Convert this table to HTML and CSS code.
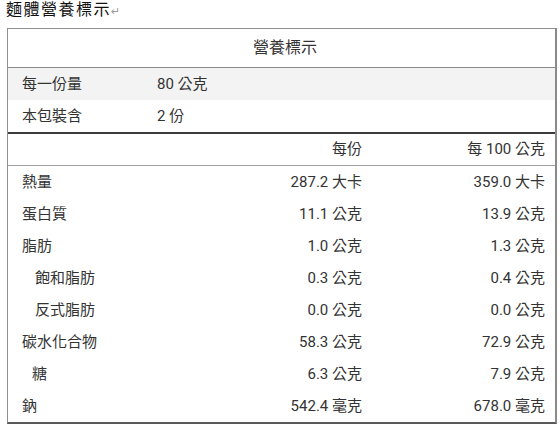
FILE: index.html
```html
<!DOCTYPE html>
<html lang="zh-Hant">
<head>
<meta charset="utf-8">
<title>麵體營養標示</title>
<link rel="stylesheet" href="styles.css">
</head>
<body>
<div class="doc-title">麵體營養標示<span class="ret">↵</span></div>
<div class="panel">
  <div class="panel-head">營養標示</div>
  <div class="row row-gray">
    <div class="c1">每一份量</div>
    <div class="c2">80 公克</div>
  </div>
  <div class="row row-pack">
    <div class="c1">本包裝含</div>
    <div class="c2">2 份</div>
  </div>
  <div class="row row-colhead">
    <div class="c1"></div>
    <div class="c3">每份</div>
    <div class="c4">每 100 公克</div>
  </div>
  <div class="row">
    <div class="c1">熱量</div>
    <div class="c3">287.2 大卡</div>
    <div class="c4">359.0 大卡</div>
  </div>
  <div class="row">
    <div class="c1">蛋白質</div>
    <div class="c3">11.1 公克</div>
    <div class="c4">13.9 公克</div>
  </div>
  <div class="row">
    <div class="c1">脂肪</div>
    <div class="c3">1.0 公克</div>
    <div class="c4">1.3 公克</div>
  </div>
  <div class="row">
    <div class="c1 sub">飽和脂肪</div>
    <div class="c3">0.3 公克</div>
    <div class="c4">0.4 公克</div>
  </div>
  <div class="row">
    <div class="c1 sub">反式脂肪</div>
    <div class="c3">0.0 公克</div>
    <div class="c4">0.0 公克</div>
  </div>
  <div class="row">
    <div class="c1">碳水化合物</div>
    <div class="c3">58.3 公克</div>
    <div class="c4">72.9 公克</div>
  </div>
  <div class="row">
    <div class="c1 sub2">糖</div>
    <div class="c3">6.3 公克</div>
    <div class="c4">7.9 公克</div>
  </div>
  <div class="row">
    <div class="c1">鈉</div>
    <div class="c3">542.4 毫克</div>
    <div class="c4">678.0 毫克</div>
  </div>
</div>
</body>
</html>
```
FILE: styles.css
```css
html, body {
  margin: 0;
  padding: 0;
  background: #ffffff;
}

body {
  font-family: Roboto, "Noto Sans CJK TC", sans-serif;
  color: #333333;
}

.doc-title {
  height: 20px;
  line-height: 20px;
  padding-left: 6px;
  font-family: "Liberation Serif", "Noto Sans CJK TC", serif;
  font-size: 16px;
  color: #111111;
  letter-spacing: 1.5px;
}

.ret {
  font-family: "DejaVu Sans", sans-serif;
  font-size: 11px;
  color: #9a9a9a;
  letter-spacing: 0;
  margin-left: 0;
}

.panel {
  box-sizing: border-box;
  width: 550px;
  margin: 8px 0 0 7px;
  border: 1px solid #8f8f8f;
  border-right: 2px solid #8a8a8a;
  border-bottom: 2px solid #5a5a5a;
}

.panel-head {
  height: 38px;
  line-height: 38px;
  text-align: center;
  font-size: 16px;
  border-bottom: 1px solid #8a8a8a;
  padding-left: 7px;
}

.row {
  display: flex;
  height: 32px;
  line-height: 32px;
  font-size: 15px;
}

.row-gray {
  background: #f3f3f3;
}

.row-pack {
  height: 32px;
}

.row-colhead {
  border-top: 2px solid #3c3c3c;
  border-bottom: 1px solid #a0a0a0;
  height: 31px;
  line-height: 31px;
}

.c1 {
  width: 142px;
  padding-left: 14px;
  box-sizing: border-box;
  white-space: nowrap;
}

.c1.sub {
  padding-left: 27px;
}

.c1.sub2 {
  padding-left: 24px;
}

.c2 {
  padding-left: 7px;
  white-space: nowrap;
}

.c3 {
  width: 227px;
  box-sizing: border-box;
  padding-right: 15px;
  text-align: right;
  white-space: nowrap;
}

.c4 {
  flex: 1;
  padding-right: 10px;
  text-align: right;
  white-space: nowrap;
}
```
